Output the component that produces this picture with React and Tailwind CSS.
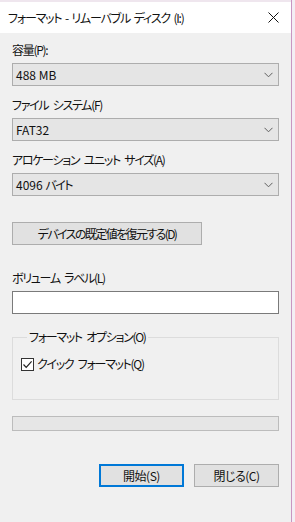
import React from 'react';

// Windows 10 style "Format" dialog (Japanese)

function Chevron() {
  return (
    <svg width="9" height="6" viewBox="0 0 9 6" className="shrink-0">
      <path d="M0.5 0.8 L4.5 4.8 L8.5 0.8" fill="none" stroke="#5f5f5f" strokeWidth="1" />
    </svg>
  );
}

function Select({ value }) {
  return (
    <div className="mt-[5px] flex h-[23px] items-center justify-between border border-[#adadad] bg-[#e5e5e5] pl-[3px] pr-[5px]">
      <span className="leading-4">{value}</span>
      <Chevron />
    </div>
  );
}

function Label({ children, className = '' }) {
  return (
    <div className={`h-4 leading-4 tracking-[-1.3px] [word-spacing:3px] ${className}`}>{children}</div>
  );
}

export default function App() {
  return (
    <div className="flex h-[522px] w-[295px] bg-[#f4eef4] font-['Noto_Sans_CJK_JP','Noto_Sans',sans-serif] text-[12px] text-[#111] [font-feature-settings:'palt']">
      <div className="flex w-[292px] flex-col border-r border-[#c995c2]">
        {/* Title bar */}
        <div className="flex h-[33px] items-center justify-between border-t-2 border-[#efe6ee] bg-white pl-2 pr-[12px]">
          <span className="leading-4 tracking-[-1.2px] [word-spacing:2px]">フォーマット - リムーバブル ディスク (I:)</span>
          <svg width="11" height="11" viewBox="0 0 11 11">
            <path d="M0.5 0.5 L10.5 10.5 M10.5 0.5 L0.5 10.5" stroke="#111" strokeWidth="1" />
          </svg>
        </div>

        {/* Body */}
        <div className="flex flex-1 flex-col bg-[#f0f0f0] px-3 pt-[9px]">
          <Label>容量(P):</Label>
          <Select value="488 MB" />

          <Label className="mt-[11px]">ファイル システム(F)</Label>
          <Select value="FAT32" />

          <Label className="mt-[11px]">アロケーション ユニット サイズ(A)</Label>
          <Select value={<>4096 <span className="tracking-[-1.5px]">バイト</span></>} />

          <button className="mt-[26px] h-[23px] w-[190px] border border-[#adadad] bg-[#e1e1e1] leading-4 tracking-[-1.6px]">
            デバイスの既定値を復元する(D)
          </button>

          <Label className="mt-[25px]">ボリューム ラベル(L)</Label>
          <div className="mt-[5px] h-[23px] border border-[#7a7a7a] bg-white" />

          <fieldset className="mt-[15px] h-[71px] border border-[#dcdcdc] px-[8px]">
            <legend className="ml-[6px] px-[2px] leading-4 tracking-[-1.3px] [word-spacing:3px]">
              フォーマット オプション(O)
            </legend>
            <div className="mt-[11px] flex items-center gap-[3px]">
              <span className="flex h-[13px] w-[13px] items-center justify-center border border-[#333] bg-white">
                <svg width="11" height="11" viewBox="0 0 11 11">
                  <path d="M1.5 5.5 L4.2 8.3 L9.6 2.4" fill="none" stroke="#222" strokeWidth="1.2" />
                </svg>
              </span>
              <span className="leading-4 tracking-[-1.3px] [word-spacing:3px]">クイック フォーマット(Q)</span>
            </div>
          </fieldset>

          <div className="mt-[16px] h-[15px] border border-[#bcbcbc] bg-[#e6e6e6]" />

          <div className="mt-[33px] flex justify-end gap-[10px]">
            <button className="h-[23px] w-[85px] border-2 border-[#0078d7] bg-[#e1e1e1] leading-4 tracking-[-0.5px]">
              開始(S)
            </button>
            <button className="h-[23px] w-[85px] border border-[#adadad] bg-[#e1e1e1] leading-4 tracking-[-0.5px]">
              閉じる(C)
            </button>
          </div>
        </div>
      </div>
    </div>
  );
}
